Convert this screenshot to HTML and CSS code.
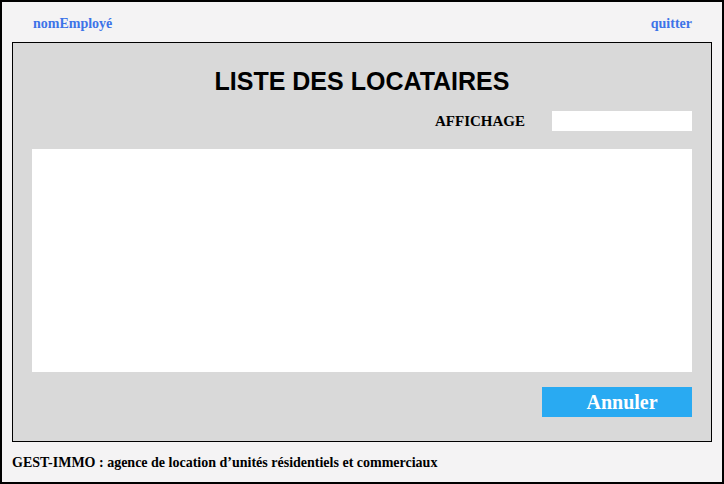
FILE: index.html
```html
<!DOCTYPE html>
<html lang="fr">
<head>
<meta charset="utf-8">
<title>Liste des locataires</title>
<link rel="stylesheet" href="styles.css">
</head>
<body>
<div class="frame">
  <header class="topbar">
    <a class="link" href="#">nomEmployé</a>
    <a class="link" href="#">quitter</a>
  </header>
  <main class="panel">
    <h1 class="title">LISTE DES LOCATAIRES</h1>
    <div class="filter">
      <label class="filter-label" for="aff">AFFICHAGE</label>
      <input class="filter-input" id="aff" type="text">
    </div>
    <div class="list"></div>
    <div class="actions">
      <button class="btn" type="button">Annuler</button>
    </div>
  </main>
  <footer class="footer">GEST-IMMO : agence de location d’unités résidentiels et commerciaux</footer>
</div>
</body>
</html>
```
FILE: styles.css
```css
html, body {
  margin: 0;
  padding: 0;
  background: #ffffff;
}
.frame {
  width: 724px;
  height: 484px;
  box-sizing: border-box;
  border: 2px solid #000;
  background: #f4f3f4;
  padding: 0 10px;
  display: flex;
  flex-direction: column;
  font-family: "Liberation Serif", "Times New Roman", serif;
}
.topbar {
  height: 40px;
  box-sizing: border-box;
  display: flex;
  justify-content: space-between;
  align-items: flex-start;
  padding: 14px 20px 0 21px;
}
.link {
  color: #3d73e8;
  font-weight: bold;
  font-size: 14px;
  line-height: 16px;
  text-decoration: none;
}
.panel {
  height: 400px;
  box-sizing: border-box;
  border: 1px solid #000;
  background: #d9d9d9;
  padding: 24px 19px 0 19px;
  display: flex;
  flex-direction: column;
}
.title {
  margin: 0;
  font-family: "Liberation Sans", Arial, sans-serif;
  font-weight: bold;
  font-size: 25px;
  line-height: 28px;
  text-align: center;
  color: #000;
}
.filter {
  margin-top: 16px;
  display: flex;
  justify-content: flex-end;
  align-items: center;
  gap: 27px;
}
.filter-label {
  font-weight: bold;
  font-size: 15px;
  color: #000;
}
.filter-input {
  width: 140px;
  height: 20px;
  box-sizing: border-box;
  border: none;
  margin: 0;
  padding: 0 4px;
  background: #fff;
}
.list {
  margin-top: 18px;
  height: 223px;
  background: #fff;
}
.actions {
  margin-top: 15px;
  display: flex;
  justify-content: flex-end;
}
.btn {
  width: 150px;
  height: 30px;
  border: none;
  margin: 0;
  padding: 0 0 0 10px;
  background: #29aaf2;
  color: #fff;
  font-family: "Liberation Serif", "Times New Roman", serif;
  font-weight: bold;
  font-size: 20px;
  line-height: 30px;
}
.footer {
  flex: 1;
  display: flex;
  align-items: center;
  padding-top: 2px;
  font-weight: bold;
  font-size: 14px;
  color: #000;
}
```
